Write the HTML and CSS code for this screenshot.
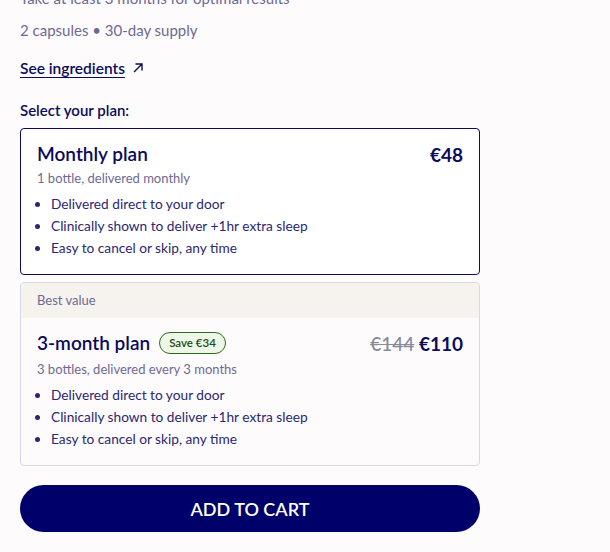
FILE: index.html
```html
<!DOCTYPE html>
<html lang="en">
<head>
  <meta charset="UTF-8" />
  <title>Select your plan</title>
  <link rel="stylesheet" href="styles.css">
</head>
<body>
  <div class="product">
    <p class="note">Take at least 3 months for optimal results</p>
    <p class="supply">2 capsules &bull; 30-day supply</p>
    <a class="ingredients" href="#">See ingredients</a>
    <span class="arrow">
      <svg width="12" height="12" viewBox="0 0 12 12"><path d="M2 10 L10 2 M3.5 2 H10 V8.5" fill="none" stroke="#0b0b5c" stroke-width="1.4"/></svg>
    </span>

    <div class="plan-label">Select your plan:</div>

    <div class="plan selected">
      <div class="plan-body">
        <div class="plan-head">
          <span class="plan-name">Monthly plan</span>
          <span class="plan-price">€48</span>
        </div>
        <div class="plan-sub">1 bottle, delivered monthly</div>
        <ul class="perks">
          <li>Delivered direct to your door</li>
          <li>Clinically shown to deliver +1hr extra sleep</li>
          <li>Easy to cancel or skip, any time</li>
        </ul>
      </div>
    </div>

    <div class="plan">
      <div class="plan-tag">Best value</div>
      <div class="plan-body">
        <div class="plan-head">
          <span class="plan-name">3-month plan <span class="save">Save €34</span></span>
          <span class="plan-price"><s class="old">€144</s> €110</span>
        </div>
        <div class="plan-sub wide">3 bottles, delivered every 3 months</div>
        <ul class="perks">
          <li>Delivered direct to your door</li>
          <li>Clinically shown to deliver +1hr extra sleep</li>
          <li>Easy to cancel or skip, any time</li>
        </ul>
      </div>
    </div>

    <button class="cart">ADD TO CART</button>
  </div>
</body>
</html>
```

FILE: styles.css
```css
body {
  margin: 0;
  background: #fdfbfb;
  font-family: 'Lato', 'Noto Sans', sans-serif;
  color: #0b0b5c;
}

.product {
  width: 460px;
  padding: 0 20px;
}

.note {
  margin: -12px 0 0;
  font-size: 15px;
  line-height: 20px;
  color: #6e6a94;
}

.supply {
  margin: 12px 0 0;
  font-size: 15px;
  line-height: 20px;
  color: #6e6a94;
}

.ingredients {
  display: inline-block;
  margin-top: 18px;
  font-size: 15.5px;
  line-height: 20px;
  font-weight: 600;
  color: #0b0b5c;
  text-decoration: underline;
  text-underline-offset: 3px;
}

.arrow {
  margin-left: 3px;
}

.plan-label {
  margin-top: 22px;
  font-size: 15px;
  line-height: 20px;
  font-weight: 600;
}

.plan {
  margin-top: 7px;
  background: #fdfbfb;
  border: 1px solid #d9d7e6;
  border-radius: 4px;
  overflow: hidden;
}

.plan.selected {
  margin-top: 8px;
  background: #fff;
  border: 1.5px solid #0b0b5c;
}

.plan-tag {
  background: #f6f3ee;
  padding: 8px 16px 9px;
  font-size: 13px;
  line-height: 18px;
  color: #6e6a94;
}

.plan-body {
  padding: 13px 16px 15px;
}

.plan-head {
  display: flex;
  justify-content: space-between;
  align-items: center;
}

.plan-name {
  display: flex;
  align-items: center;
  gap: 9px;
  font-size: 19px;
  line-height: 24px;
  font-weight: 600;
}

.plan-price {
  font-size: 19px;
  font-weight: 700;
}

.old {
  color: #8a8a99;
  font-weight: 500;
}

.save {
  font-size: 11.5px;
  line-height: 13px;
  font-weight: 600;
  color: #1f4a14;
  background: #eef8e6;
  border: 1px solid #2f6b1f;
  border-radius: 20px;
  padding: 3px 9px 4px;
}

.plan-sub {
  margin-top: 3px;
  font-size: 13px;
  line-height: 18px;
  color: #6e6a94;
}

.plan-sub.wide {
  margin-top: 5px;
}

.perks {
  margin: 6px 0 0;
  padding-left: 14px;
  font-size: 13.7px;
  line-height: 22px;
  color: #2a2870;
}

.cart {
  display: block;
  width: 460px;
  height: 47px;
  margin-top: 19px;
  border: none;
  border-radius: 24px;
  background: #00006b;
  color: #fff;
  font-family: 'Lato', sans-serif;
  font-size: 18px;
  font-weight: 600;
  cursor: pointer;
}
```
